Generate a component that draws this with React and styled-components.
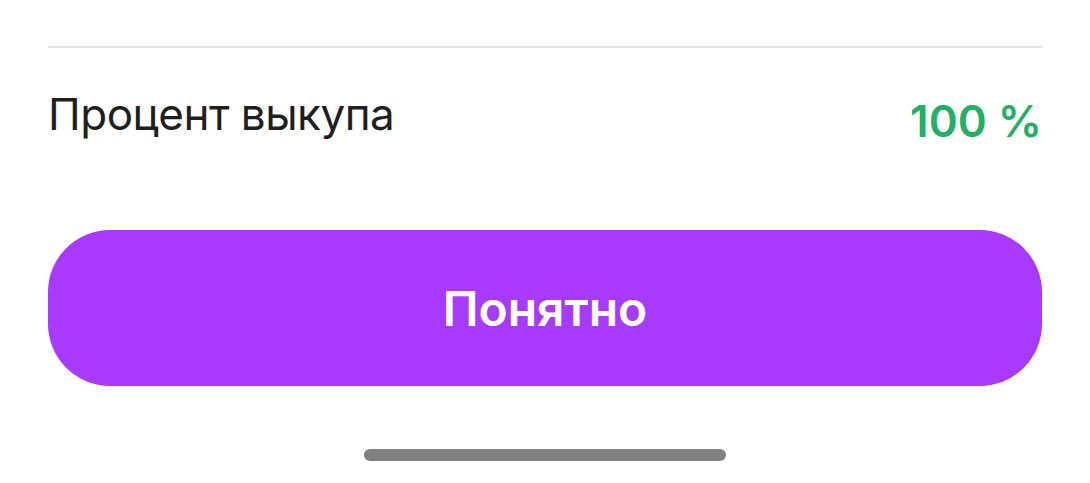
import React from "react";
import styled, { createGlobalStyle } from "styled-components";

const Global = createGlobalStyle`
  html, body {
    margin: 0;
    padding: 0;
    background: #fff;
    font-family: Inter, "Noto Sans", sans-serif;
  }
`;

const Sheet = styled.div`
  width: 1090px;
  height: 483px;
  box-sizing: border-box;
  padding: 46px 48px 0 48px;
  display: flex;
  flex-direction: column;
  overflow: hidden;
`;

const Divider = styled.div`
  height: 2px;
  background: #e2e2e2;
  width: 994px;
`;

const Row = styled.div`
  display: flex;
  justify-content: space-between;
  align-items: center;
  height: 140px;
`;

const Label = styled.span`
  font-size: 44px;
  color: #1f1f1f;
  letter-spacing: -0.5px;
  margin-top: -9px;
`;

const Value = styled.span`
  font-size: 44px;
  font-weight: 600;
  color: #22b066;
  margin-top: 6px;
`;

const Button = styled.button`
  margin-top: 42px;
  height: 156px;
  width: 994px;
  border: none;
  border-radius: 62px;
  background: #a73afd;
  color: #fff;
  font-family: Inter, "Noto Sans", sans-serif;
  font-size: 48px;
  font-weight: 600;
  cursor: pointer;
`;

const HomeBar = styled.div`
  align-self: center;
  margin-top: 63px;
  width: 362px;
  height: 12px;
  border-radius: 6px;
  background: #808080;
`;

export default function App() {
  return (
    <>
      <Global />
      <Sheet>
        <Divider />
        <Row>
          <Label>Процент выкупа</Label>
          <Value>100 %</Value>
        </Row>
        <Button>Понятно</Button>
        <HomeBar />
      </Sheet>
    </>
  );
}
